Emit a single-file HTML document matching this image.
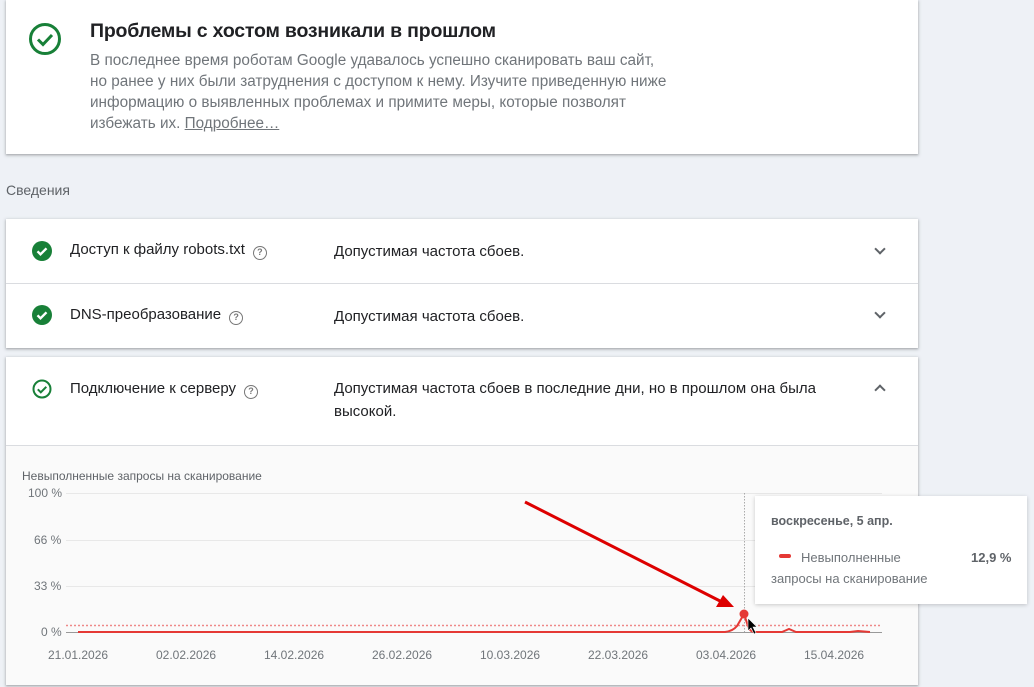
<!DOCTYPE html>
<html><head><meta charset="utf-8"><style>
*{margin:0;padding:0;box-sizing:border-box}
body{width:1034px;height:687px;background:#eef1f6;font-family:"Liberation Sans",Roboto,sans-serif;position:relative;overflow:hidden;color:#202124}
.card{position:absolute;left:6px;width:912px;background:#fff;box-shadow:0 1px 2px rgba(60,64,67,.3),0 1px 3px 1px rgba(60,64,67,.15)}
.abs{position:absolute}
.row{position:absolute;left:0;width:912px;border-bottom:1px solid #dadce0}
.lbl{position:absolute;left:64px;font-size:15px;color:#202124}
.val{position:absolute;left:328px;font-size:15px;color:#202124;line-height:23px}
.q{display:inline-block;width:14px;height:14px;border:1.5px solid #777;border-radius:50%;font-size:9px;line-height:11px;text-align:center;color:#777;margin-left:8px;vertical-align:-1px;font-weight:bold}
.chev{position:absolute;left:870px;width:8px;height:8px;border-right:2px solid #5f6368;border-bottom:2px solid #5f6368}
.ax{position:absolute;font-size:12px;color:#70757a}
</style></head><body>
<div class="card" style="top:0;height:154px">
  <svg class="abs" style="left:22px;top:22px" width="34" height="34" viewBox="0 0 34 34"><circle cx="17" cy="17" r="14.5" fill="none" stroke="#188038" stroke-width="3"/><path d="M10 17.5l5 5 9-9.5" fill="none" stroke="#188038" stroke-width="3"/></svg>
  <div class="abs" style="left:84px;top:20px;font-size:19.5px;font-weight:bold;color:#202124;letter-spacing:-0.2px">Проблемы с хостом возникали в прошлом</div>
  <div class="abs" style="left:84px;top:50px;width:620px;font-size:15.3px;line-height:21px;color:#70757a">В последнее время роботам Google удавалось успешно сканировать ваш сайт,<br>но ранее у них были затруднения с доступом к нему. Изучите приведенную ниже<br>информацию о выявленных проблемах и примите меры, которые позволят<br>избежать их. <u>Подробнее…</u></div>
</div>
<div class="abs" style="left:6px;top:182px;font-size:14px;color:#5f6368">Сведения</div>
<div class="card" style="top:219px;height:129px">
  <div class="row" style="top:0;height:65px">
    <svg class="abs" style="left:26px;top:22px" width="20" height="20" viewBox="0 0 20 20"><circle cx="10" cy="10" r="10" fill="#188038"/><path d="M5.5 10.3l3 3 6-6" fill="none" stroke="#fff" stroke-width="2.4"/></svg>
    <div class="lbl" style="top:22px">Доступ к файлу robots.txt<span class="q">?</span></div>
    <div class="val" style="top:21px">Допустимая частота сбоев.</div>
    <div class="chev" style="top:26px;transform:rotate(45deg)"></div>
  </div>
  <div class="row" style="top:65px;height:64px;border:none">
    <svg class="abs" style="left:26px;top:21px" width="20" height="20" viewBox="0 0 20 20"><circle cx="10" cy="10" r="10" fill="#188038"/><path d="M5.5 10.3l3 3 6-6" fill="none" stroke="#fff" stroke-width="2.4"/></svg>
    <div class="lbl" style="top:22px">DNS-преобразование<span class="q">?</span></div>
    <div class="val" style="top:21px">Допустимая частота сбоев.</div>
    <div class="chev" style="top:25px;transform:rotate(45deg)"></div>
  </div>
</div>
<div class="card" style="top:357px;height:328px">
  <div class="row" style="top:0;height:89px">
    <svg class="abs" style="left:26px;top:22px" width="20" height="20" viewBox="0 0 20 20"><circle cx="10" cy="10" r="8.5" fill="none" stroke="#188038" stroke-width="2"/><path d="M5.8 10.3l3 3 5.5-5.5" fill="none" stroke="#188038" stroke-width="2"/></svg>
    <div class="lbl" style="top:23px">Подключение к серверу<span class="q">?</span></div>
    <div class="val" style="top:20px">Допустимая частота сбоев в последние дни, но в прошлом она была<br>высокой.</div>
    <div class="chev" style="top:29px;transform:rotate(225deg)"></div>
  </div>
  <div class="abs" style="left:0;top:89px;width:912px;height:239px;background:#fafafa"></div>
</div>
<div class="abs" style="left:22px;top:469px;font-size:12px;color:#5f6368">Невыполненные запросы на сканирование</div>
<div class="ax" style="left:28px;top:486px">100 %</div>
<div class="ax" style="left:34px;top:533px">66 %</div>
<div class="ax" style="left:34px;top:579px">33 %</div>
<div class="ax" style="left:41px;top:625px">0 %</div>
<svg class="abs" style="left:0;top:0" width="1034" height="687">
  <g stroke="#e8e8e8" stroke-width="1"><line x1="66" y1="493.5" x2="882" y2="493.5"/><line x1="66" y1="540.5" x2="882" y2="540.5"/><line x1="66" y1="586.5" x2="882" y2="586.5"/></g>
  <line x1="66" y1="632.5" x2="882" y2="632.5" stroke="#999"/>
  <line x1="744.5" y1="493" x2="744.5" y2="632" stroke="#aaa" stroke-dasharray="1.5,1.5"/>
  <line x1="66" y1="625.5" x2="882" y2="625.5" stroke="#e88" stroke-width="1.5" stroke-dasharray="2,2"/>
  <path d="M78 632 L725 632 Q733 631 737 626 L744 614 L748 626 Q750 632 755 632 L782 632 L789 629 L796 632 L850 632 L858 631 L870 632" fill="none" stroke="#e53935" stroke-width="2"/>
  <circle cx="744" cy="614" r="4.5" fill="#e53935"/>
  <line x1="525" y1="502" x2="722" y2="602" stroke="#d00" stroke-width="3"/>
  <path d="M734 607 L716 607 L723 595 Z" fill="#d00"/>
  <path d="M748 618 L748 631 L751 628 L754 634 L756 633 L753 627 L757 627 Z" fill="#000" stroke="#fff" stroke-width=".6"/>
</svg>
<div class="ax" style="left:48px;top:648px">21.01.2026</div>
<div class="ax" style="left:156px;top:648px">02.02.2026</div>
<div class="ax" style="left:264px;top:648px">14.02.2026</div>
<div class="ax" style="left:372px;top:648px">26.02.2026</div>
<div class="ax" style="left:480px;top:648px">10.03.2026</div>
<div class="ax" style="left:588px;top:648px">22.03.2026</div>
<div class="ax" style="left:696px;top:648px">03.04.2026</div>
<div class="ax" style="left:804px;top:648px">15.04.2026</div>
<div class="abs" style="left:755px;top:496px;width:272px;height:108px;background:#fff;box-shadow:0 1px 4px rgba(0,0,0,.2)">
  <div class="abs" style="left:16px;top:18px;font-size:12.5px;font-weight:bold;color:#5f6368">воскресенье, 5 апр.</div>
  <div class="abs" style="left:24px;top:58px;width:12px;height:4px;background:#e53935;border-radius:2px"></div>
  <div class="abs" style="left:16px;top:51px;width:180px;font-size:13px;line-height:21px;color:#70757a"><span style="padding-left:30px">Невыполненные</span><br>запросы на сканирование</div>
  <div class="abs" style="left:216px;top:51px;font-size:13px;line-height:21px;font-weight:bold;color:#5f6368">12,9 %</div>
</div>
</body></html>
